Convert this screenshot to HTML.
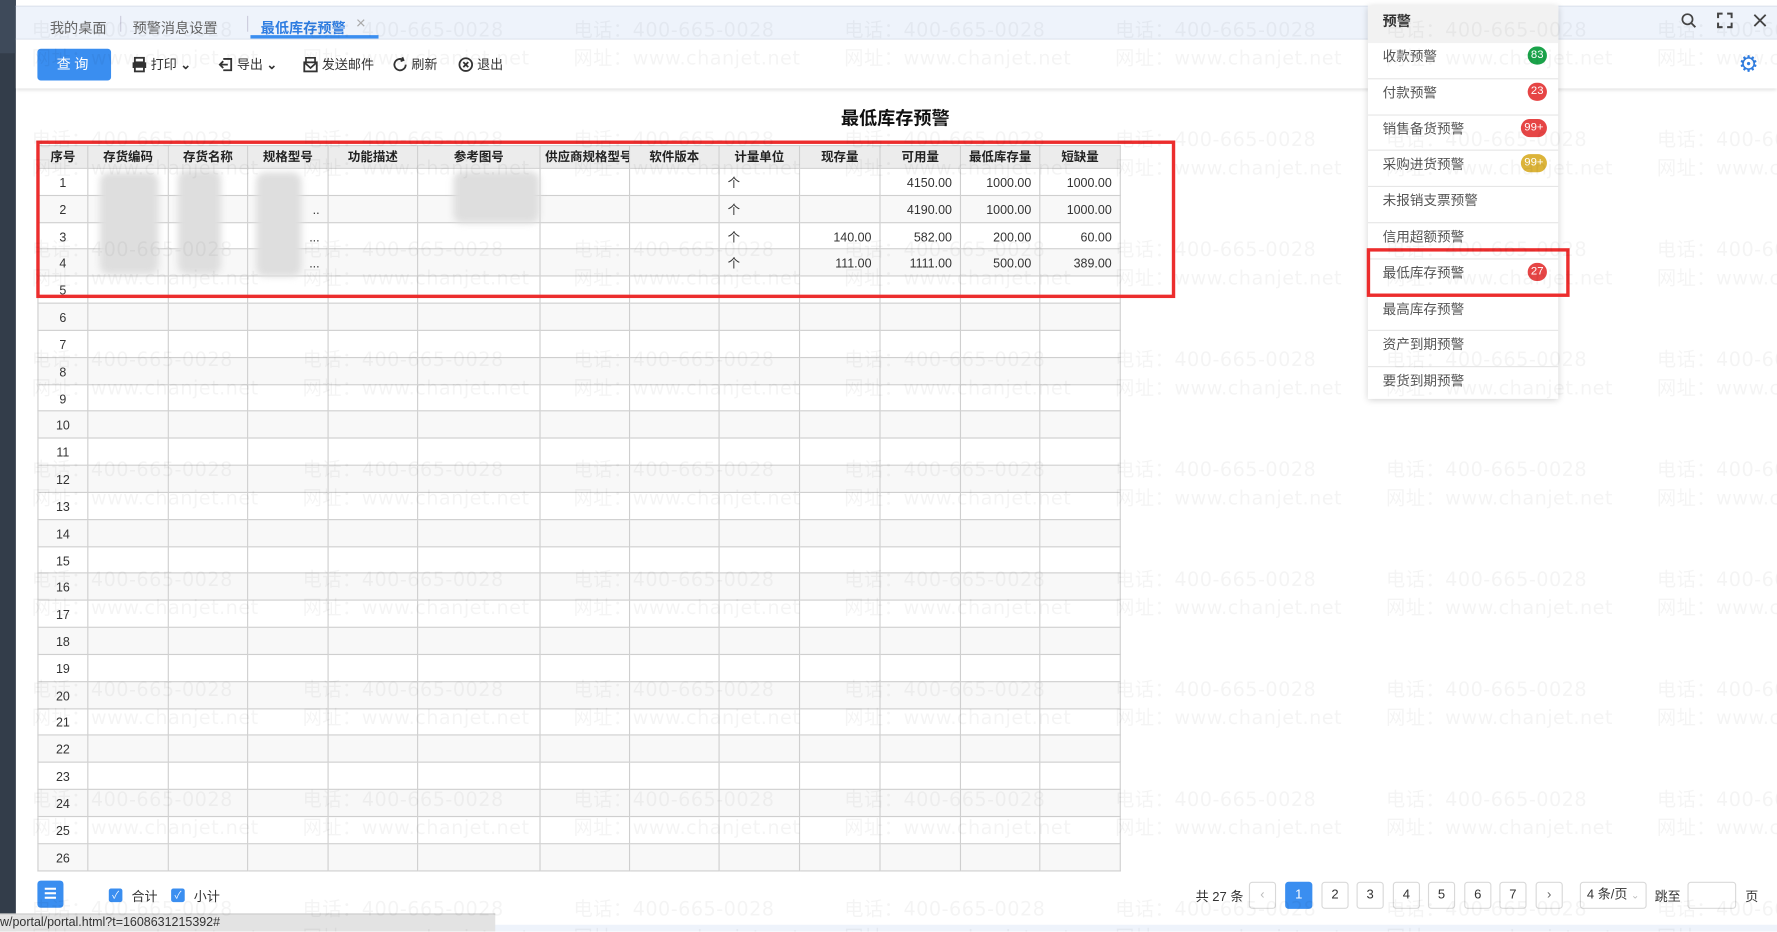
<!DOCTYPE html>
<html><head><meta charset="utf-8"><style>
*{margin:0;padding:0;box-sizing:border-box}
html,body{width:1777px;height:931px;overflow:hidden;background:#fff}
#w{position:absolute;left:0;top:0;width:1568px;height:822px;transform:scale(1.13329);transform-origin:0 0;font-family:"Liberation Sans","Noto Sans CJK SC",sans-serif;font-size:12px;color:#333;background:#fff;overflow:hidden}
.a{position:absolute}
.side{left:0;top:0;width:14px;height:822px;background:#333d4a}
.tabs{left:14px;top:5px;width:1554px;height:30px;background:#eef3fb;border-bottom:1px solid #dde3ee;border-top:1px solid #dde3ee}
.tab{top:9px;font-size:12.5px;color:#666}
.tool{left:14px;top:35px;width:1554px;height:43px;background:#fff;box-shadow:0 2px 3px rgba(0,0,0,.12)}
.btn{left:33px;top:43px;width:65px;height:28px;background:#3a8ef0;color:#fff;border-radius:3px;text-align:center;line-height:28px;font-size:12.5px;letter-spacing:3px}
.ti{top:49px;font-size:11.5px;color:#333;display:flex;align-items:center;gap:3px}
table{border-collapse:collapse;table-layout:fixed}
td,th{border:1px solid #cfcfcf;height:23.84px;font-size:11px;padding:0 7px;overflow:hidden;white-space:nowrap;line-height:14px}
td{padding-top:3px}
th{height:20px;background:#ececec;font-weight:bold;color:#222;padding-top:0}
td.c{text-align:center}
td.r{text-align:right}
tr:nth-child(odd) td{background:#f8f8f8}
.blob{background:#dedede;filter:blur(3px);border-radius:8px}
.dd{left:1207px;top:5px;width:168px;height:347px;background:#fff;box-shadow:0 1px 6px rgba(0,0,0,.2)}
.dh{height:33px;background:#f2f2f2;font-weight:bold;padding:0 13px;line-height:29px;font-size:12.5px}
.di{height:31.8px;border-bottom:1px solid #e6e6e6;padding:0 13px;line-height:25px;font-size:12px;color:#555;position:relative}
.bd{position:absolute;right:10px;top:3px;height:16px;min-width:17px;border-radius:8px;color:#fff;font-size:10px;line-height:16px;text-align:center;padding:0 3px}
.pg{top:778px;width:24px;height:24px;border:1px solid #d9d9d9;border-radius:3px;text-align:center;line-height:22px;font-size:11.5px;background:#fff}
.wm{left:28px;top:15px;width:1700px;display:flex;flex-wrap:wrap;pointer-events:none;color:rgba(0,0,0,.045);font-size:17px;letter-spacing:0.4px;font-family:"DejaVu Sans","Noto Sans CJK SC",sans-serif}
.wm div{width:239px;height:97px;line-height:25px;white-space:nowrap}
.cb{width:12px;height:12px;background:#3a8ef0;border-radius:2px;color:#fff;font-size:9px;line-height:12px;text-align:center;top:784px}
</style></head><body><div id="w">
<div class="a side"></div>
<div class="a" style="left:0;top:0;width:14px;height:47px;background:#3e4a5a"></div>
<div class="a tabs"></div>
<div class="a tab" style="left:44px;top:14px">我的桌面</div>
<div class="a" style="left:106px;top:14px;width:1px;height:14px;background:#ccd"></div>
<div class="a tab" style="left:117px;top:14px">预警消息设置</div>
<div class="a" style="left:218px;top:14px;width:1px;height:14px;background:#ccd"></div>
<div class="a tab" style="left:230px;top:14px;color:#2f7de1;font-weight:bold">最低库存预警</div>
<div class="a tab" style="left:314px;top:12px;color:#aaa;font-size:15px">×</div>
<div class="a" style="left:221px;top:31px;width:113px;height:3px;background:#3a8ef0"></div>
<svg class="a" style="left:1483px;top:11px" width="15" height="15" viewBox="0 0 15 15"><circle cx="6" cy="6" r="4.5" fill="none" stroke="#444" stroke-width="1.5"/><path d="M9.5 9.5L13 13" stroke="#444" stroke-width="1.6"/></svg>
<svg class="a" style="left:1515px;top:11px" width="14" height="14" viewBox="0 0 14 14"><path d="M1 5V1H5M9 1H13V5M13 9V13H9M5 13H1V9" fill="none" stroke="#444" stroke-width="1.8"/></svg>
<svg class="a" style="left:1546px;top:11px" width="14" height="14" viewBox="0 0 14 14"><path d="M2 2L12 12M12 2L2 12" stroke="#444" stroke-width="1.6"/></svg>
<div class="a tool"></div>
<div class="a btn">查询</div>
<div class="a ti" style="left:116px"><svg width="14" height="14" viewBox="0 0 14 14"><rect x="3" y="1" width="8" height="4" fill="none" stroke="#333" stroke-width="1.6"/><rect x="1" y="5" width="12" height="5" fill="#333"/><rect x="3" y="9" width="8" height="4" fill="#fff" stroke="#333" stroke-width="1.6"/></svg>打印 <b>⌄</b></div>
<div class="a ti" style="left:192px"><svg width="14" height="14" viewBox="0 0 14 14"><path d="M5 2H12V12H5M9 7H2M5 4L2 7L5 10" fill="none" stroke="#333" stroke-width="1.6"/></svg>导出 <b>⌄</b></div>
<div class="a ti" style="left:267px"><svg width="14" height="14" viewBox="0 0 14 14"><rect x="1.5" y="5" width="11" height="8" fill="none" stroke="#333" stroke-width="1.6"/><path d="M1.5 5L7 10L12.5 5M3 5V1H11V5" fill="none" stroke="#333" stroke-width="1.5"/></svg>发送邮件</div>
<div class="a ti" style="left:346px"><svg width="14" height="14" viewBox="0 0 14 14"><path d="M12 7A5 5 0 1 1 9.5 2.7M9 0.5L10 3L7.5 4" fill="none" stroke="#333" stroke-width="1.6"/></svg>刷新</div>
<div class="a ti" style="left:404px"><svg width="14" height="14" viewBox="0 0 14 14"><circle cx="7" cy="7" r="5.6" fill="none" stroke="#333" stroke-width="1.6"/><path d="M4.8 4.8L9.2 9.2M9.2 4.8L4.8 9.2" stroke="#333" stroke-width="1.6"/></svg>退出</div>
<div class="a" style="left:1534px;top:44px;font-size:20px;color:#2f7de1">⚙</div>
<div class="a" style="left:0;top:91px;width:1580px;text-align:center;font-size:16px;font-weight:bold;color:#111">最低库存预警</div>
<table class="a" style="left:33px;top:128px;width:955px">
<colgroup><col style="width:44px"><col style="width:71px"><col style="width:70px"><col style="width:71px"><col style="width:79px"><col style="width:108px"><col style="width:79px"><col style="width:79px"><col style="width:71px"><col style="width:71px"><col style="width:71px"><col style="width:70px"><col style="width:71px"></colgroup>
<tr><th>序号</th><th>存货编码</th><th>存货名称</th><th>规格型号</th><th>功能描述</th><th>参考图号</th><th style="padding:0 4px">供应商规格型号</th><th>软件版本</th><th>计量单位</th><th>现存量</th><th>可用量</th><th>最低库存量</th><th>短缺量</th></tr>
<tr><td class="c">1</td><td></td><td></td><td></td><td></td><td></td><td></td><td></td><td>个</td><td></td><td class="r">4150.00</td><td class="r">1000.00</td><td class="r">1000.00</td></tr>
<tr><td class="c">2</td><td></td><td></td><td class="r">..</td><td></td><td></td><td></td><td></td><td>个</td><td></td><td class="r">4190.00</td><td class="r">1000.00</td><td class="r">1000.00</td></tr>
<tr><td class="c">3</td><td></td><td></td><td class="r">...</td><td></td><td></td><td></td><td></td><td>个</td><td class="r">140.00</td><td class="r">582.00</td><td class="r">200.00</td><td class="r">60.00</td></tr>
<tr><td class="c">4</td><td></td><td></td><td class="r">...</td><td></td><td></td><td></td><td></td><td>个</td><td class="r">111.00</td><td class="r">1111.00</td><td class="r">500.00</td><td class="r">389.00</td></tr>
<tr><td class="c">5</td><td></td><td></td><td></td><td></td><td></td><td></td><td></td><td></td><td></td><td></td><td></td><td></td></tr>
<tr><td class="c">6</td><td></td><td></td><td></td><td></td><td></td><td></td><td></td><td></td><td></td><td></td><td></td><td></td></tr>
<tr><td class="c">7</td><td></td><td></td><td></td><td></td><td></td><td></td><td></td><td></td><td></td><td></td><td></td><td></td></tr>
<tr><td class="c">8</td><td></td><td></td><td></td><td></td><td></td><td></td><td></td><td></td><td></td><td></td><td></td><td></td></tr>
<tr><td class="c">9</td><td></td><td></td><td></td><td></td><td></td><td></td><td></td><td></td><td></td><td></td><td></td><td></td></tr>
<tr><td class="c">10</td><td></td><td></td><td></td><td></td><td></td><td></td><td></td><td></td><td></td><td></td><td></td><td></td></tr>
<tr><td class="c">11</td><td></td><td></td><td></td><td></td><td></td><td></td><td></td><td></td><td></td><td></td><td></td><td></td></tr>
<tr><td class="c">12</td><td></td><td></td><td></td><td></td><td></td><td></td><td></td><td></td><td></td><td></td><td></td><td></td></tr>
<tr><td class="c">13</td><td></td><td></td><td></td><td></td><td></td><td></td><td></td><td></td><td></td><td></td><td></td><td></td></tr>
<tr><td class="c">14</td><td></td><td></td><td></td><td></td><td></td><td></td><td></td><td></td><td></td><td></td><td></td><td></td></tr>
<tr><td class="c">15</td><td></td><td></td><td></td><td></td><td></td><td></td><td></td><td></td><td></td><td></td><td></td><td></td></tr>
<tr><td class="c">16</td><td></td><td></td><td></td><td></td><td></td><td></td><td></td><td></td><td></td><td></td><td></td><td></td></tr>
<tr><td class="c">17</td><td></td><td></td><td></td><td></td><td></td><td></td><td></td><td></td><td></td><td></td><td></td><td></td></tr>
<tr><td class="c">18</td><td></td><td></td><td></td><td></td><td></td><td></td><td></td><td></td><td></td><td></td><td></td><td></td></tr>
<tr><td class="c">19</td><td></td><td></td><td></td><td></td><td></td><td></td><td></td><td></td><td></td><td></td><td></td><td></td></tr>
<tr><td class="c">20</td><td></td><td></td><td></td><td></td><td></td><td></td><td></td><td></td><td></td><td></td><td></td><td></td></tr>
<tr><td class="c">21</td><td></td><td></td><td></td><td></td><td></td><td></td><td></td><td></td><td></td><td></td><td></td><td></td></tr>
<tr><td class="c">22</td><td></td><td></td><td></td><td></td><td></td><td></td><td></td><td></td><td></td><td></td><td></td><td></td></tr>
<tr><td class="c">23</td><td></td><td></td><td></td><td></td><td></td><td></td><td></td><td></td><td></td><td></td><td></td><td></td></tr>
<tr><td class="c">24</td><td></td><td></td><td></td><td></td><td></td><td></td><td></td><td></td><td></td><td></td><td></td><td></td></tr>
<tr><td class="c">25</td><td></td><td></td><td></td><td></td><td></td><td></td><td></td><td></td><td></td><td></td><td></td><td></td></tr>
<tr><td class="c">26</td><td></td><td></td><td></td><td></td><td></td><td></td><td></td><td></td><td></td><td></td><td></td><td></td></tr>
</table>
<div class="a blob" style="left:88px;top:152px;width:52px;height:90px"></div>
<div class="a blob" style="left:157px;top:150px;width:38px;height:92px"></div>
<div class="a blob" style="left:226px;top:152px;width:40px;height:92px"></div>
<div class="a blob" style="left:400px;top:151px;width:76px;height:46px"></div>
<div class="a" style="left:32px;top:124px;width:1005px;height:139px;border:3px solid #ec2d2d"></div>
<div class="a dd">
<div class="dh">预警</div>
<div class="di">收款预警<span class="bd" style="background:#1aa34a">83</span></div>
<div class="di">付款预警<span class="bd" style="background:#e64545">23</span></div>
<div class="di">销售备货预警<span class="bd" style="background:#e64545">99+</span></div>
<div class="di">采购进货预警<span class="bd" style="background:#dcb43a">99+</span></div>
<div class="di">未报销支票预警</div>
<div class="di">信用超额预警</div>
<div class="di">最低库存预警<span class="bd" style="background:#e64545">27</span></div>
<div class="di">最高库存预警</div>
<div class="di">资产到期预警</div>
<div class="di" style="border:0">要货到期预警</div>
</div>
<div class="a" style="left:1206px;top:219px;width:179px;height:43px;border:3px solid #ec2d2d"></div>
<div class="a" style="left:33px;top:777px;width:23px;height:24px;background:#3a8ef0;border-radius:3px;color:#fff;text-align:center;line-height:24px;font-size:13px;font-weight:bold">☰</div>
<div class="a cb" style="left:96px">✓</div><div class="a" style="left:116px;top:783px;font-size:11.5px">合计</div>
<div class="a cb" style="left:151px">✓</div><div class="a" style="left:171px;top:783px;font-size:11.5px">小计</div>
<div class="a" style="left:1055px;top:783px;font-size:11.5px">共 27 条</div>
<div class="a pg" style="left:1102px;color:#bbb">‹</div>
<div class="a pg" style="left:1134px;background:#3a8ef0;border-color:#3a8ef0;color:#fff">1</div>
<div class="a pg" style="left:1166px">2</div>
<div class="a pg" style="left:1197px">3</div>
<div class="a pg" style="left:1229px">4</div>
<div class="a pg" style="left:1260px">5</div>
<div class="a pg" style="left:1292px">6</div>
<div class="a pg" style="left:1323px">7</div>
<div class="a pg" style="left:1355px;color:#666">›</div>
<div class="a pg" style="left:1394px;width:59px">4 条/页 <span style="color:#bbb;font-size:9px">⌄</span></div>
<div class="a" style="left:1460px;top:783px;font-size:11.5px">跳至</div>
<div class="a pg" style="left:1489px;width:43px"></div>
<div class="a" style="left:1540px;top:783px;font-size:11.5px">页</div>
<div class="a" style="left:0;top:816px;width:1568px;height:6px;background:#eef3fb"></div>
<div class="a" style="left:0;top:806px;width:437px;height:16px;background:#e3e3e3;border-top:1px solid #ccc;font-size:11px;line-height:15px;color:#333">w/portal/portal.html?t=1608631215392#</div>
<div class="a wm">
<div>电话：400-665-0028<br>网址：www.chanjet.net</div><div>电话：400-665-0028<br>网址：www.chanjet.net</div><div>电话：400-665-0028<br>网址：www.chanjet.net</div><div>电话：400-665-0028<br>网址：www.chanjet.net</div><div>电话：400-665-0028<br>网址：www.chanjet.net</div><div>电话：400-665-0028<br>网址：www.chanjet.net</div><div>电话：400-665-0028<br>网址：www.chanjet.net</div>
<div>电话：400-665-0028<br>网址：www.chanjet.net</div><div>电话：400-665-0028<br>网址：www.chanjet.net</div><div>电话：400-665-0028<br>网址：www.chanjet.net</div><div>电话：400-665-0028<br>网址：www.chanjet.net</div><div>电话：400-665-0028<br>网址：www.chanjet.net</div><div>电话：400-665-0028<br>网址：www.chanjet.net</div><div>电话：400-665-0028<br>网址：www.chanjet.net</div>
<div>电话：400-665-0028<br>网址：www.chanjet.net</div><div>电话：400-665-0028<br>网址：www.chanjet.net</div><div>电话：400-665-0028<br>网址：www.chanjet.net</div><div>电话：400-665-0028<br>网址：www.chanjet.net</div><div>电话：400-665-0028<br>网址：www.chanjet.net</div><div>电话：400-665-0028<br>网址：www.chanjet.net</div><div>电话：400-665-0028<br>网址：www.chanjet.net</div>
<div>电话：400-665-0028<br>网址：www.chanjet.net</div><div>电话：400-665-0028<br>网址：www.chanjet.net</div><div>电话：400-665-0028<br>网址：www.chanjet.net</div><div>电话：400-665-0028<br>网址：www.chanjet.net</div><div>电话：400-665-0028<br>网址：www.chanjet.net</div><div>电话：400-665-0028<br>网址：www.chanjet.net</div><div>电话：400-665-0028<br>网址：www.chanjet.net</div>
<div>电话：400-665-0028<br>网址：www.chanjet.net</div><div>电话：400-665-0028<br>网址：www.chanjet.net</div><div>电话：400-665-0028<br>网址：www.chanjet.net</div><div>电话：400-665-0028<br>网址：www.chanjet.net</div><div>电话：400-665-0028<br>网址：www.chanjet.net</div><div>电话：400-665-0028<br>网址：www.chanjet.net</div><div>电话：400-665-0028<br>网址：www.chanjet.net</div>
<div>电话：400-665-0028<br>网址：www.chanjet.net</div><div>电话：400-665-0028<br>网址：www.chanjet.net</div><div>电话：400-665-0028<br>网址：www.chanjet.net</div><div>电话：400-665-0028<br>网址：www.chanjet.net</div><div>电话：400-665-0028<br>网址：www.chanjet.net</div><div>电话：400-665-0028<br>网址：www.chanjet.net</div><div>电话：400-665-0028<br>网址：www.chanjet.net</div>
<div>电话：400-665-0028<br>网址：www.chanjet.net</div><div>电话：400-665-0028<br>网址：www.chanjet.net</div><div>电话：400-665-0028<br>网址：www.chanjet.net</div><div>电话：400-665-0028<br>网址：www.chanjet.net</div><div>电话：400-665-0028<br>网址：www.chanjet.net</div><div>电话：400-665-0028<br>网址：www.chanjet.net</div><div>电话：400-665-0028<br>网址：www.chanjet.net</div>
<div>电话：400-665-0028<br>网址：www.chanjet.net</div><div>电话：400-665-0028<br>网址：www.chanjet.net</div><div>电话：400-665-0028<br>网址：www.chanjet.net</div><div>电话：400-665-0028<br>网址：www.chanjet.net</div><div>电话：400-665-0028<br>网址：www.chanjet.net</div><div>电话：400-665-0028<br>网址：www.chanjet.net</div><div>电话：400-665-0028<br>网址：www.chanjet.net</div>
<div>电话：400-665-0028<br>网址：www.chanjet.net</div><div>电话：400-665-0028<br>网址：www.chanjet.net</div><div>电话：400-665-0028<br>网址：www.chanjet.net</div><div>电话：400-665-0028<br>网址：www.chanjet.net</div><div>电话：400-665-0028<br>网址：www.chanjet.net</div><div>电话：400-665-0028<br>网址：www.chanjet.net</div><div>电话：400-665-0028<br>网址：www.chanjet.net</div>
</div>
</div></body></html>
